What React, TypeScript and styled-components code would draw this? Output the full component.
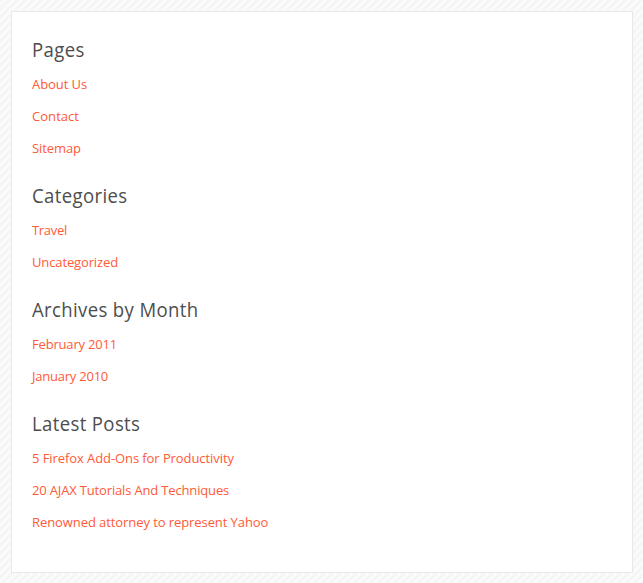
import React from "react";
import styled, { createGlobalStyle } from "styled-components";

const GlobalStyle = createGlobalStyle`
  * { box-sizing: border-box; }
  body {
    margin: 0;
    background: repeating-linear-gradient(135deg, #f5f5f5 0 2.1213px, #fbfbfb 2.1213px 4.2426px, #f8f8f8 4.2426px 5.6569px);
  }
`;

const Page = styled.div`
  height: 583px;
  padding: 11px 10px 10px 11px;
`;

const Panel = styled.main`
  height: 562px;
  padding: 20px;
  background: #fff;
  border: 1px solid #e8e8e8;
  display: flex;
  flex-direction: column;
  gap: 14px;
`;

const Section = styled.section`
  display: flex;
  flex-direction: column;
  align-items: flex-start;
`;

const Heading = styled.h2`
  margin: 0;
  height: 36px;
  font: 400 20.5px/34px "Open Sans", "Noto Sans", sans-serif;
  letter-spacing: 0.4px;
  color: #4d4d4d;
  white-space: nowrap;
  transform: scaleX(0.905);
  transform-origin: left;
`;

const List = styled.ul`
  margin: 0;
  padding: 0;
  list-style: none;
`;

const Item = styled.li<{ $tracking: number }>`
  height: 32px;
  font: 400 13px/32px "Open Sans", "Noto Sans", sans-serif;
  letter-spacing: ${(p) => p.$tracking}px;
  white-space: nowrap;
`;

const Link = styled.a`
  color: #ff5a36;
  text-decoration: none;
`;

const sections: { title: string; links: [string, number][] }[] = [
  { title: "Pages", links: [["About Us", -0.08], ["Contact", 0.05], ["Sitemap", -0.08]] },
  { title: "Categories", links: [["Travel", -0.3], ["Uncategorized", -0.13]] },
  { title: "Archives by Month", links: [["February 2011", -0.18], ["January 2010", -0.23]] },
  {
    title: "Latest Posts",
    links: [
      ["5 Firefox Add-Ons for Productivity", -0.08],
      ["20 AJAX Tutorials And Techniques", -0.16],
      ["Renowned attorney to represent Yahoo", -0.08],
    ],
  },
];

export default function App() {
  return (
    <>
      <GlobalStyle />
      <Page>
        <Panel>
          {sections.map((s) => (
            <Section key={s.title}>
              <Heading>{s.title}</Heading>
              <List>
                {s.links.map(([label, tracking]) => (
                  <Item key={label} $tracking={tracking}>
                    <Link href="#">{label}</Link>
                  </Item>
                ))}
              </List>
            </Section>
          ))}
        </Panel>
      </Page>
    </>
  );
}
